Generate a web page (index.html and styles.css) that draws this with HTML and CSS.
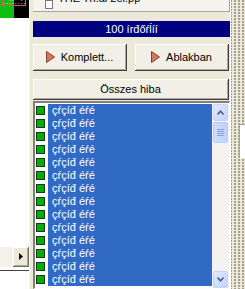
FILE: index.html
```html
<!DOCTYPE html>
<html>
<head>
<meta charset="utf-8">
<link rel="stylesheet" href="styles.css">
</head>
<body>
<div class="screen">
  <div class="left">
    <div class="left-top">
      <div class="green"></div>
      <div class="black"></div>
      <div class="tag">..::..:.</div>
    </div>
    <div class="left-fill"></div>
    <div class="hscroll">
      <div class="htrack"></div>
      <div class="hbtn"><svg width="4" height="7" viewBox="0 0 4 7"><path d="M0 0 L4 3.5 L0 7 Z" fill="#000"/></svg></div>
    </div>
    <div class="hline"></div>
    <div class="left-bottom"></div>
  </div>
  <div class="divider"></div>
  <div class="main">
    <div class="topbox">
      <svg class="docicon" width="8" height="9" viewBox="0 0 8 9"><rect x="0.5" y="0.5" width="7" height="8" fill="#fff" stroke="#7a7a7a"/></svg>
      <span class="toptext">THE Tn.al 2el.pp</span>
    </div>
    <div class="title">100 írđőŕĺíí</div>
    <div class="btnrow">
      <button class="btn"><svg class="tri" width="9" height="12" viewBox="0 0 9 12"><path d="M0.5 0.5 L8.5 6 L0.5 11.5 Z" fill="#d8755f" stroke="#8a3b2c"/></svg><span>Komplett...</span></button>
      <button class="btn"><svg class="tri" width="9" height="12" viewBox="0 0 9 12"><path d="M0.5 0.5 L8.5 6 L0.5 11.5 Z" fill="#d8755f" stroke="#8a3b2c"/></svg><span>Ablakban</span></button>
    </div>
    <button class="btn wide">Összes hiba</button>
    <div class="list">
      <div class="items">
        <div class="row"><span class="box"></span><span class="sel">çŕçíđ éŕé</span></div>
        <div class="row"><span class="box"></span><span class="sel">çŕçíđ éŕé</span></div>
        <div class="row"><span class="box"></span><span class="sel">çŕçíđ éŕé</span></div>
        <div class="row"><span class="box"></span><span class="sel">çŕçíđ éŕé</span></div>
        <div class="row"><span class="box"></span><span class="sel">çŕçíđ éŕé</span></div>
        <div class="row"><span class="box"></span><span class="sel">çŕçíđ éŕé</span></div>
        <div class="row"><span class="box"></span><span class="sel">çŕçíđ éŕé</span></div>
        <div class="row"><span class="box"></span><span class="sel">çŕçíđ éŕé</span></div>
        <div class="row"><span class="box"></span><span class="sel">çŕçíđ éŕé</span></div>
        <div class="row"><span class="box"></span><span class="sel">çŕçíđ éŕé</span></div>
        <div class="row"><span class="box"></span><span class="sel">çŕçíđ éŕé</span></div>
        <div class="row"><span class="box"></span><span class="sel">çŕçíđ éŕé</span></div>
        <div class="row"><span class="box"></span><span class="sel">çŕçíđ éŕé</span></div>
        <div class="row"><span class="box"></span><span class="sel">çŕçíđ éŕé</span></div>
      </div>
      <div class="vscroll">
        <div class="sbtn"><svg width="7" height="5" viewBox="0 0 7 5"><path d="M0.5 4.5 L3.5 1.2 L6.5 4.5" fill="none" stroke="#4d6185" stroke-width="1.6"/></svg></div>
        <div class="thumb"><span></span><span></span><span></span><span></span></div>
        <div class="strack"></div>
        <div class="sbtn"><svg width="7" height="5" viewBox="0 0 7 5"><path d="M0.5 0.5 L3.5 3.8 L6.5 0.5" fill="none" stroke="#4d6185" stroke-width="1.6"/></svg></div>
      </div>
    </div>
  </div>
  <div class="splitter">
    <div class="sideedge"></div>
  </div>
</div>
</body>
</html>
```
FILE: styles.css
```css
html, body {
  margin: 0;
  padding: 0;
}
body {
  width: 245px;
  height: 289px;
  overflow: hidden;
  background: #ece9d8;
  font-family: "Liberation Sans", Arial, sans-serif;
  font-size: 11px;
}
.screen {
  display: flex;
  width: 245px;
  height: 289px;
  overflow: hidden;
}
.left {
  width: 29px;
  display: flex;
  flex-direction: column;
  background: #fff;
}
.left-top {
  position: relative;
  display: flex;
  height: 18px;
}
.green {
  width: 14px;
  background: #10c010;
}
.black {
  flex: 1;
  background: #000;
}
.tag {
  position: absolute;
  left: 2px;
  top: -3px;
  width: 24px;
  height: 9px;
  border: 1px solid #c86060;
  color: #fff;
  font-size: 7px;
  line-height: 8px;
  letter-spacing: 1px;
  overflow: hidden;
  box-sizing: border-box;
}
.left-fill {
  height: 229px;
  background: #fff;
}
.hscroll {
  display: flex;
  height: 20px;
  background: #f3f1ea;
}
.htrack {
  width: 13px;
}
.hbtn {
  width: 15px;
  display: flex;
  align-items: center;
  justify-content: center;
  background: #ece9d8;
  border-right: 1px solid #716f64;
  border-bottom: 1px solid #716f64;
  box-shadow: inset 1px 1px 0 #fff, inset -1px -1px 0 #aca899;
}
.hline {
  height: 3px;
  background: #fff;
  border-bottom: 1px solid #404040;
}
.left-bottom {
  flex: 1;
  background: #fff;
}
.divider {
  width: 4px;
  background: #ece9d8;
  border-left: 1px solid #f7f6f1;
  box-sizing: border-box;
}
.main {
  width: 197px;
  display: flex;
  flex-direction: column;
  background: #ece9d8;
  overflow: hidden;
}
.topbox {
  height: 11px;
  background: #f4f3ee;
  border-bottom: 1px solid #a8a698;
  border-right: 1px solid #a8a698;
  display: flex;
  align-items: flex-end;
  overflow: hidden;
  padding-left: 12px;
  gap: 5px;
}
.docicon {
  margin-bottom: 2px;
}
.toptext {
  line-height: 11px;
  margin-bottom: 7px;
  color: #000;
}
.title {
  margin-top: 9px;
  height: 16px;
  background: #000080;
  color: #fff;
  text-align: center;
  line-height: 16px;
}
.btnrow {
  margin-top: 7px;
  display: flex;
  gap: 8px;
  padding-right: 1px;
}
.btn {
  font-family: "Liberation Sans", Arial, sans-serif;
  font-size: 11px;
  color: #000;
  background: #f1efe6;
  border: none;
  border-right: 1px solid #404040;
  border-bottom: 1px solid #404040;
  box-shadow: inset 1px 1px 0 #fff, inset -1px -1px 0 #aca899;
  padding: 0;
  margin: 0;
  display: flex;
  align-items: center;
  justify-content: center;
}
.btnrow .btn {
  flex: 1;
  height: 27px;
  gap: 6px;
}
.tri {
  display: block;
}
.wide {
  margin-top: 8px;
  margin-right: 1px;
  height: 21px;
}
.list {
  margin-top: 1px;
  display: flex;
  height: 190px;
  border-top: 2px solid #808080;
  border-left: 2px solid #808080;
  border-right: 1px solid #fff;
  border-bottom: 1px solid #fff;
  background: #fff;
  box-sizing: border-box;
}
.items {
  flex: 1;
  padding-top: 1px;
  background: #fff;
}
.row {
  height: 13px;
  display: flex;
  align-items: center;
}
.box {
  width: 7px;
  height: 7px;
  margin-left: 1px;
  border: 1px solid #1b3a1b;
  background: #00b000;
  flex: none;
}
.sel {
  flex: 1;
  height: 13px;
  margin-left: 3px;
  background: #316ac5;
  color: #fff;
  line-height: 13px;
  padding-left: 4px;
  white-space: nowrap;
}
.vscroll {
  width: 17px;
  display: flex;
  flex-direction: column;
  background: #f4f3ef;
  padding-top: 1px;
}
.sbtn {
  height: 15px;
  margin: 0 1px;
  border: 1px solid #c3d3fd;
  border-radius: 2px;
  background: linear-gradient(135deg, #e0e9fe, #c2d4fb);
  display: flex;
  align-items: center;
  justify-content: center;
  flex: none;
}
.thumb {
  height: 19px;
  margin: 1px 1px 0;
  border: 1px solid #b8ccf8;
  border-radius: 2px;
  background: linear-gradient(90deg, #cfdcfd, #c0d2fb);
  display: flex;
  flex-direction: column;
  align-items: center;
  justify-content: center;
  gap: 1px;
  flex: none;
}
.thumb span {
  width: 7px;
  height: 1px;
  background: #8aa3de;
}
.strack {
  flex: 1;
}
.splitter {
  flex: 1;
  position: relative;
  border-left: 1px solid #fff;
  background-color: #ece9d8;
  background-image: radial-gradient(circle at 1px 1px, #a39f8f 0.7px, transparent 0.9px);
  background-size: 4px 3px;
  background-position: 3px 0;
}
.sideedge {
  position: absolute;
  left: 8px;
  top: 124px;
  width: 8px;
  height: 33px;
  background: #fff;
  border-left: 1px solid #a8a698;
  border-top: 1px solid #a8a698;
}
```
